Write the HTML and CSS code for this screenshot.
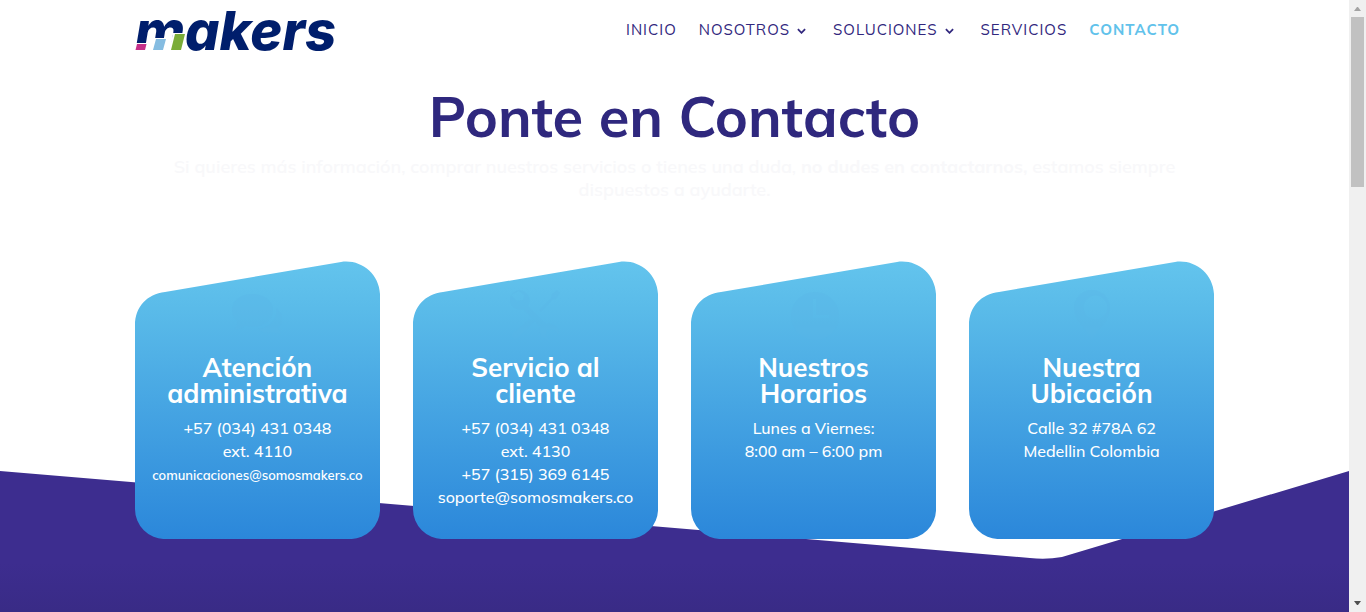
FILE: index.html
```html
<!DOCTYPE html>
<html lang="es">
<head>
<meta charset="utf-8">
<meta name="viewport" content="width=device-width, initial-scale=1">
<title>Contacto - Makers</title>
<link rel="stylesheet" href="styles.css">
</head>
<body>
<div class="viewport">
  <div class="page">
    <svg class="wave" viewBox="0 0 1349 141" preserveAspectRatio="none" aria-hidden="true">
      <defs><linearGradient id="wave-fill" x1="0" y1="0" x2="0" y2="1"><stop offset="0" stop-color="#3d2d8f"/><stop offset=".65" stop-color="#3d2d8f"/><stop offset="1" stop-color="#392b86"/></linearGradient></defs>
      <path fill="url(#wave-fill)" d="M0 0 L1030 87 Q1046 89 1062 86 L1349 0 V141 H0 Z"/>
    </svg>
    <div class="content">
      <header class="header container">
        <a class="logo" href="#" aria-label="makers">
          <svg viewBox="0 0 210 60" width="210" height="60">
            <text class="logo-text" x="0" y="50">makers</text>
            <path fill="#fff" d="M1 43H13L11 52H-1ZM19 38H31L29 52H16ZM38 33H50L47 52H34Z"/>
            <path fill="#c52f89" d="M2 44H11.500L10 50H.5Z"/>
            <path fill="#85bce1" d="M21 39H31L28 50H18Z"/>
            <path fill="#7aac38" d="M40 34H50L46 50H36Z"/>
          </svg>
        </a>
        <nav class="nav" aria-label="Principal">
          <a href="#">INICIO</a>
          <a href="#">NOSOTROS <svg class="chevron" viewBox="0 0 10 6" aria-hidden="true"><path d="M1 1l4 4 4-4"/></svg></a>
          <a href="#">SOLUCIONES <svg class="chevron" viewBox="0 0 10 6" aria-hidden="true"><path d="M1 1l4 4 4-4"/></svg></a>
          <a href="#">SERVICIOS</a>
          <a class="active" href="#" aria-current="page">CONTACTO</a>
        </nav>
      </header>
      <main class="container">
        <section class="intro">
          <h1>Ponte en Contacto</h1>
          <p>Si quieres más información, comprar nuestros servicios o tienes una duda, <strong>no dudes en contactarnos,</strong> estamos siempre<br>dispuestos a ayudarte.</p>
        </section>
        <section class="cards">
          <article class="card">
            <svg class="card-shape" viewBox="0 0 245 278" preserveAspectRatio="none" aria-hidden="true">
              <defs><linearGradient id="card-fill" x1="0" y1="0" x2="0" y2="1"><stop offset="0" stop-color="#63c4ed"/><stop offset=".17" stop-color="#5abbe9"/><stop offset="1" stop-color="#2b87da"/></linearGradient></defs>
              <path id="card-path" fill="url(#card-fill)" d="M0 64 C0 46 12 33 30 31 L206 1 C226 -2 245 13 245 35 V248 A30 30 0 0 1 215 278 H30 A30 30 0 0 1 0 248 Z"/>
            </svg>
            <div class="card-body">
              <svg class="icon" viewBox="0 0 50 50" aria-hidden="true"><path d="M20 4C8 4 0 11 0 20c0 5 2 9 6 12-1 3-3 6-5 8 5 0 9-2 12-4 17 3 28-5 28-16C41 11 32 4 20 4Z"/><path d="M44 18c2 11-6 20-18 21 4 4 10 5 15 3 2 1 5 2 9 2-2-2-3-4-4-6 7-6 5-15-2-20Z"/></svg>
              <h2>Atención<br>administrativa</h2>
              <p>+57 (034) 431 0348<br>ext. 4110<br><a class="small" href="#">comunicaciones@somosmakers.co</a></p>
            </div>
          </article>
          <article class="card">
            <svg class="card-shape" viewBox="0 0 245 278" preserveAspectRatio="none" aria-hidden="true"><use href="#card-path"/></svg>
            <div class="card-body">
              <svg class="icon" viewBox="0 0 50 50" aria-hidden="true"><path d="M1 5a10 10 0 0 1 17 11l18 18a10 10 0 0 1 13 11l-6-6-6 1-1 6 4 4a10 10 0 0 1-10-13L13 19A10 10 0 0 1 1 5l6 6 6-1 1-5L9 1Z"/><path d="M20 29 3 43c-4 4 2 8 5 5l17-17ZM29 20 41 8l1-4 5-4 3 3-4 6-4 1-11 12Z"/></svg>
              <h2>Servicio al<br>cliente</h2>
              <p>+57 (034) 431 0348<br>ext. 4130<br>+57 (315) 369 6145<br><a href="#">soporte@somosmakers.co</a></p>
            </div>
          </article>
          <article class="card">
            <svg class="card-shape" viewBox="0 0 245 278" preserveAspectRatio="none" aria-hidden="true"><use href="#card-path"/></svg>
            <div class="card-body">
              <svg class="icon" viewBox="0 0 50 50" aria-hidden="true"><path fill-rule="evenodd" d="M26 2a24 24 0 1 0 .1 0ZM24 9h3v16h13v3H24Z"/></svg>
              <h2>Nuestros<br>Horarios</h2>
              <p>Lunes a Viernes:<br>8:00 am – 6:00 pm</p>
            </div>
          </article>
          <article class="card">
            <svg class="card-shape" viewBox="0 0 245 278" preserveAspectRatio="none" aria-hidden="true"><use href="#card-path"/></svg>
            <div class="card-body">
              <svg class="icon" viewBox="0 0 50 50" aria-hidden="true"><path fill-rule="evenodd" d="M25 0C15 0 7 8 7 18c0 12 11 19 18 32 7-13 18-20 18-32C43 8 35 0 25 0Zm0 6a12 12 0 1 1 0 23 12 12 0 0 1 0-23Z"/></svg>
              <h2>Nuestra<br>Ubicación</h2>
              <p>Calle 32 #78A 62<br>Medellin Colombia</p>
            </div>
          </article>
        </section>
      </main>
    </div>
  </div>
  <div class="scrollbar" aria-hidden="true">
    <svg class="arrow arrow-up" viewBox="0 0 7 4"><path d="M3 0h1l3 4H0Z"/></svg>
    <div class="thumb"></div>
    <svg class="arrow arrow-down" viewBox="0 0 7 4"><path d="M0 0h7L4 4H3Z"/></svg>
  </div>
</div>
</body>
</html>
```

FILE: styles.css
```css
* { box-sizing: border-box; }
body { margin: 0; background: #fff; font-family: Mulish, Muli, "Open Sans", sans-serif; }
h1, h2, p { margin: 0; }
a { color: inherit; text-decoration: none; }

.viewport { display: grid; grid-template-columns: minmax(0, 1fr) 17px; min-height: 100vh; }
.page { display: grid; grid-template-columns: minmax(0, 1fr); }
.page > * { grid-area: 1 / 1; }
.wave { align-self: end; display: block; width: 100%; height: 141px; }
.content { z-index: 1; }
.container { width: 80%; margin: 0 auto; }

.header { display: flex; justify-content: space-between; align-items: center; height: 60px; padding-right: 34px; }
.logo svg { display: block; overflow: visible; }
.logo-text { font: italic 800 54px Inter, sans-serif; fill: #001e6c; }
.nav { display: flex; gap: 22px; font-size: 15px; line-height: 20px; letter-spacing: 1px; color: #32287e; white-space: nowrap; }
.chevron { width: 9px; height: 6px; margin: 0 5px 0 2px; vertical-align: 1px; fill: none; stroke: #32287e; stroke-width: 2; }
.active { color: #61c2eb; font-weight: 700; }

.intro { padding: 28px 0 60px; text-align: center; }
h1 { font-size: 56px; line-height: 56px; font-weight: 700; color: #2f287e; }
.intro p { padding-top: 11px; font-size: 18px; line-height: 23px; font-weight: 600; color: #f8f8fa; }
.intro strong { font-weight: 700; }

.cards { display: grid; grid-template-columns: repeat(4, minmax(0, 1fr)); gap: 33px; padding-bottom: 73px; }
.card { display: grid; grid-template-columns: minmax(0, 1fr); min-height: 278px; color: #fff; text-align: center; }
.card > * { grid-area: 1 / 1; }
.card-shape { display: block; width: 100%; height: 100%; min-height: 278px; }
.card-body { z-index: 1; padding: 29px 0 28px; }
.icon { display: block; width: 50px; height: 50px; margin: 0 auto 15px; fill: #5ab6e7; opacity: .3; }
h2 { font-size: 26px; line-height: 26px; font-weight: 700; }
.card p { padding-top: 10px; font-size: 16px; line-height: 23px; font-weight: 500; }
.card .small { font-size: 13px; font-weight: 600; }

.scrollbar { display: flex; flex-direction: column; align-items: center; background: #f0f0f0; }
.thumb { width: 13px; height: 170px; margin-bottom: auto; background: #c1c1c1; }
.arrow { width: 7px; height: 4px; }
.arrow-up { margin: 7px 0 6px; fill: #a3a3a3; }
.arrow-down { margin: 6px 0 7px; fill: #505050; }
```
